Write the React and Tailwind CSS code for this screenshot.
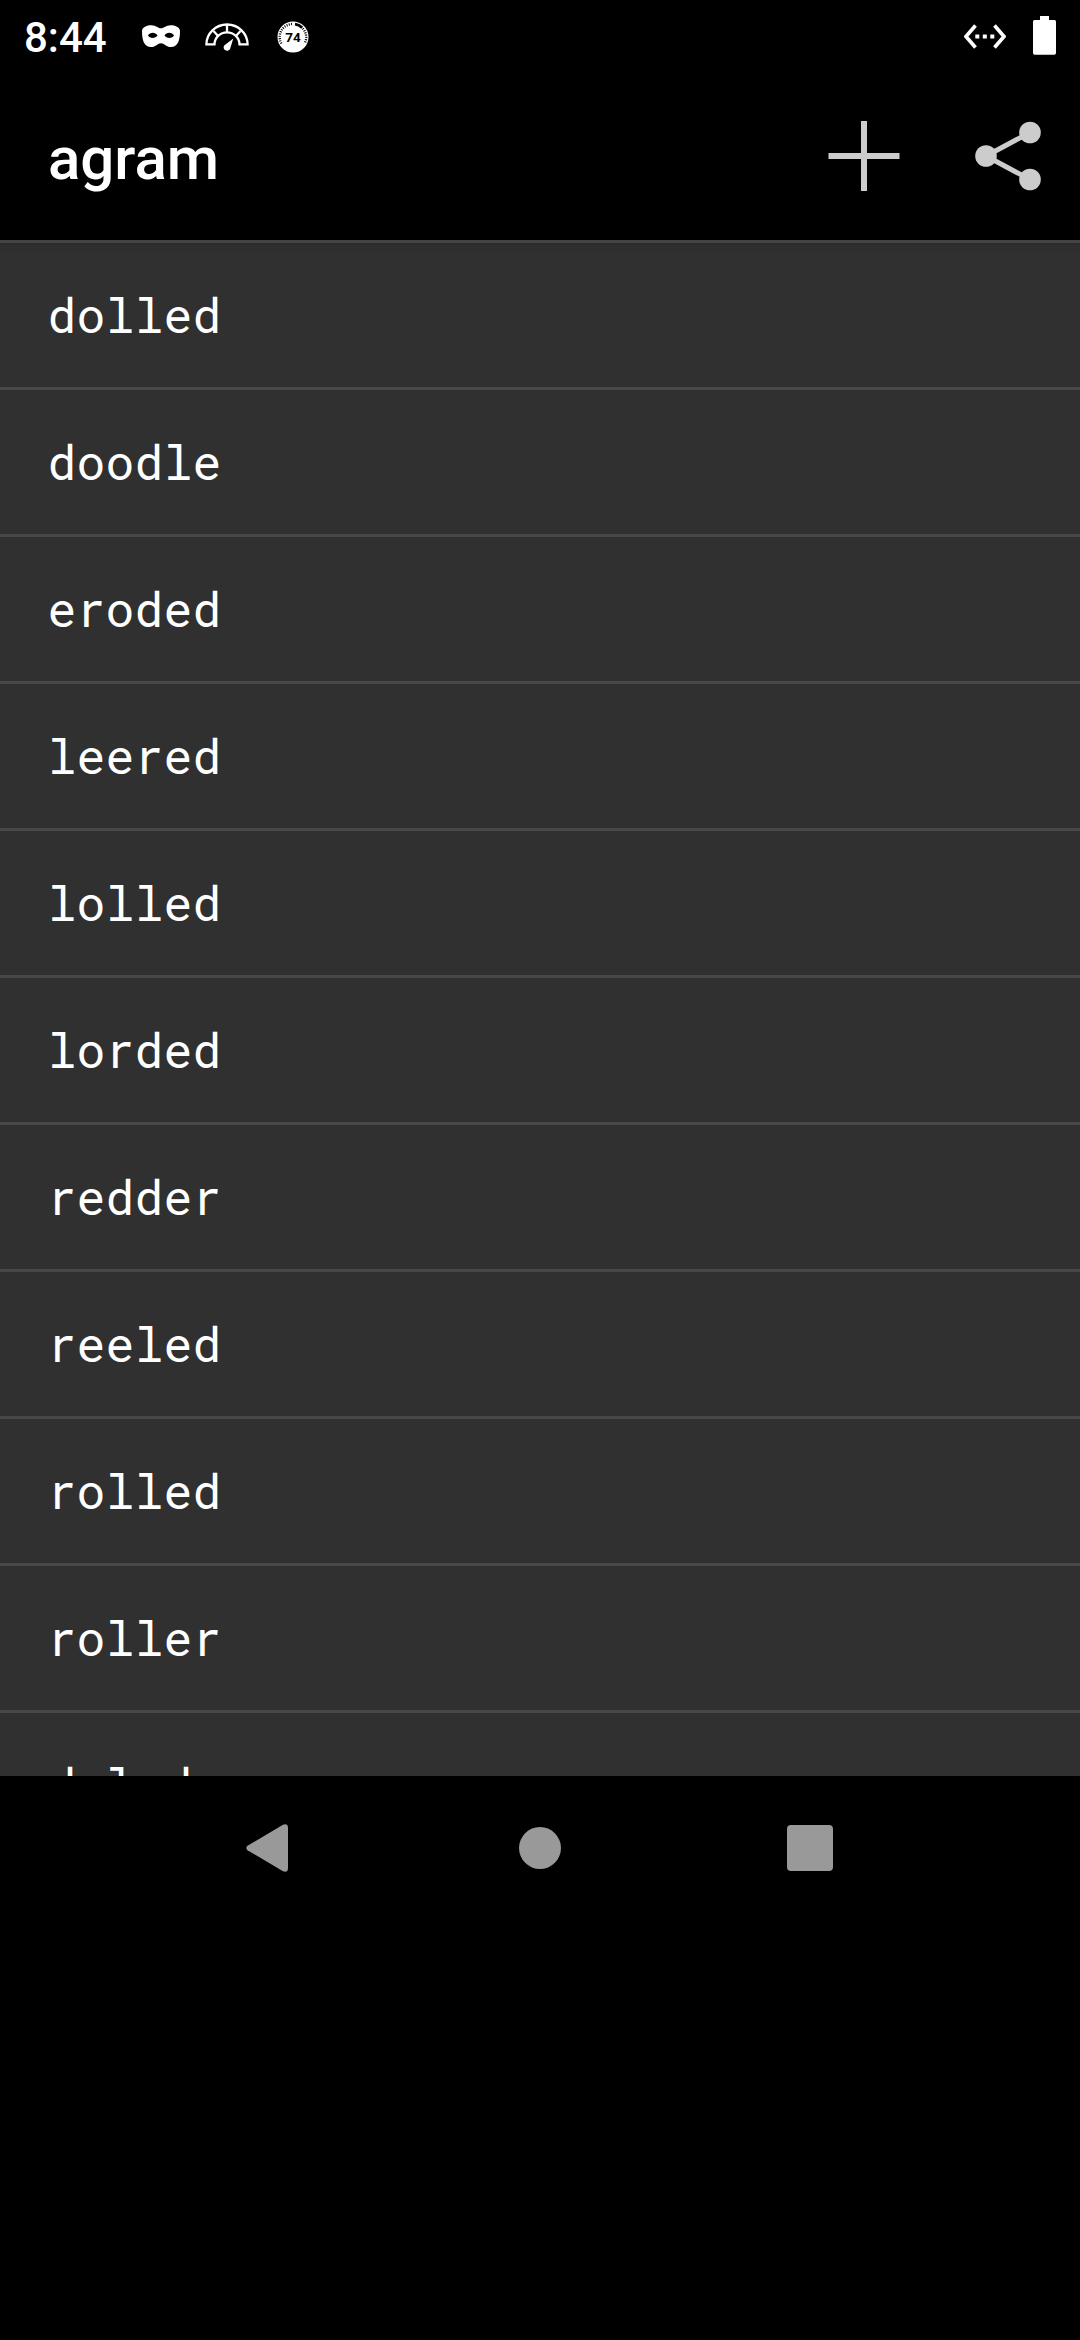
const words = [
  'dolled', 'doodle', 'eroded', 'leered', 'lolled', 'lorded',
  'redder', 'reeled', 'rolled', 'roller', 'doled',
];

function MaskIcon() {
  return (
    <svg width="38" height="23" viewBox="0 0 38 23" className="ml-[36px] mt-[24.5px]">
      <path
        fill="#fff"
        fillRule="evenodd"
        d="M0 6C0 2 5 .2 9.500 .2C14 .2 16 3.300 19 3.300C22 3.300 24 .2 28.500 .2C33 .2 38 2 38 6C38 15 36 22 29 22C24 22 22.500 18.200 19 18.200C15.500 18.200 14 22 9 22C2 22 0 15 0 6ZM6 10.500C7.500 13.700 13.500 13.700 15.500 10.500C13.500 6.700 8 6.700 6 10.500ZM32 10.500C30 6.700 24.500 6.700 22.500 10.500C24.500 13.700 30.500 13.700 32 10.500Z"
      />
    </svg>
  );
}

function GaugeIcon() {
  return (
    <svg width="44" height="30" viewBox="0 0 44 30" className="ml-[25px] mt-[22.5px]">
      <g fill="none" stroke="#fff" strokeWidth="2.300">
        <path d="M1.400 21.400A20.600 19.900 0 0 1 42.600 21.400H34.500A12.500 12 0 0 0 9.500 21.400Z" />
        <path d="M22 1.500V9.500M8.500 8L13.500 13.500M35.500 8L30.500 13.500" />
      </g>
      <path fill="#fff" d="M28.300 15.600L25.200 25.500A3.400 3.400 0 1 1 19.200 22.400Z" />
    </svg>
  );
}

function BadgeIcon() {
  return (
    <svg width="32" height="32" viewBox="0 0 32 32" className="ml-[28px] mt-[20.5px]">
      <circle cx="16" cy="16" r="15.500" fill="#fff" />
      <path d="M4.400 22.500A13 13 0 0 1 16 3" fill="none" stroke="#000" strokeWidth="2.400" strokeDasharray="1 1.300" />
      <path d="M25.800 7.500A13 13 0 0 1 27.600 22.500" fill="none" stroke="#000" strokeWidth="2.400" strokeDasharray="1 1.300" />
      <path d="M18 3.200A13 13 0 0 1 25.200 6.800" fill="none" stroke="#000" strokeWidth="2.800" />
      <text x="16" y="21" textAnchor="middle" className="fill-black font-['Roboto',sans-serif] text-[13.5px] font-bold">74</text>
    </svg>
  );
}

function StatusBar() {
  return (
    <div className="flex h-[72px] items-start text-white">
      <div className="ml-6 mt-[13px] w-[82px] text-[42px] leading-[50px] font-medium">8:44</div>
      <MaskIcon />
      <GaugeIcon />
      <BadgeIcon />
      <div className="grow" />
      <svg width="42" height="25" viewBox="0 0 42 25" className="mt-[24px]">
        <path d="M11.500 1.500L2 12.500L11.500 23.500M30.500 1.500L40 12.500L30.500 23.500" fill="none" stroke="#fff" strokeWidth="3.600" />
        <path d="M11.300 10.500h4v4h-4zM18.800 10.500h4v4h-4zM26.300 10.500h4v4h-4z" fill="#fff" />
      </svg>
      <svg width="23" height="39" viewBox="0 0 23 39" className="ml-[27px] mr-[24px] mt-[16px]">
        <path d="M7 0H16V4H21.500A1.500 1.500 0 0 1 23 5.500V37A1.700 1.700 0 0 1 21.300 38.700H1.700A1.700 1.700 0 0 1 0 37V5.500A1.500 1.500 0 0 1 1.500 4H7Z" fill="#fff" />
      </svg>
    </div>
  );
}

function AppBar() {
  return (
    <header className="flex h-[168px] items-start">
      <h1 className="ml-12 mt-[52px] grow text-[60px] leading-[70px] font-medium text-white">agram</h1>
      <button className="mt-[48px]" aria-label="Add">
        <svg width="72" height="72" viewBox="0 0 72 72">
          <path d="M33 1H39V33H71.500V39H39V71H33V39H.5V33H33Z" fill="#ccc" />
        </svg>
      </button>
      <button className="ml-[75px] mr-[38px] mt-[48px]" aria-label="Share">
        <svg width="67" height="72" viewBox="0 0 67 72">
          <path d="M55 12.500L11 36L55 59.500" fill="none" stroke="#ccc" strokeWidth="5" />
          <g fill="#ccc">
            <circle cx="55" cy="12.500" r="10.800" />
            <circle cx="11" cy="36" r="10.800" />
            <circle cx="55" cy="59.500" r="10.800" />
          </g>
        </svg>
      </button>
    </header>
  );
}

function NavBar() {
  return (
    <nav className="flex h-[144px] items-center">
      <svg width="42" height="48" viewBox="0 0 42 48" className="ml-[246px]">
        <path d="M1.500 21.800L37 .7Q42 -1 42 4V44Q42 49 37 47.300L1.500 26.200Q-1 24 1.500 21.800Z" fill="#999" />
      </svg>
      <div className="ml-[231px] size-[42px] rounded-full bg-[#999]" />
      <div className="ml-[226px] size-[46px] rounded-[4px] bg-[#999]" />
    </nav>
  );
}

export default function App() {
  return (
    <div className="h-[2340px] w-[1080px] overflow-hidden bg-black font-['Roboto',sans-serif]">
      <StatusBar />
      <AppBar />
      <ul className="h-[1536px] overflow-hidden bg-[#303030]">
        {words.map((word) => (
          <li
            key={word}
            className="h-[147px] border-t-[3px] border-[#484848] pl-[47.5px] font-['Roboto_Mono','DejaVu_Sans_Mono',monospace] text-[48px] leading-[144px] tracking-[0.2px] text-white first:border-[#444] first:bg-linear-to-b first:from-[#2c2c2c] first:to-[#303030] first:to-[10px]"
          >
            {word}
          </li>
        ))}
      </ul>
      <NavBar />
    </div>
  );
}
